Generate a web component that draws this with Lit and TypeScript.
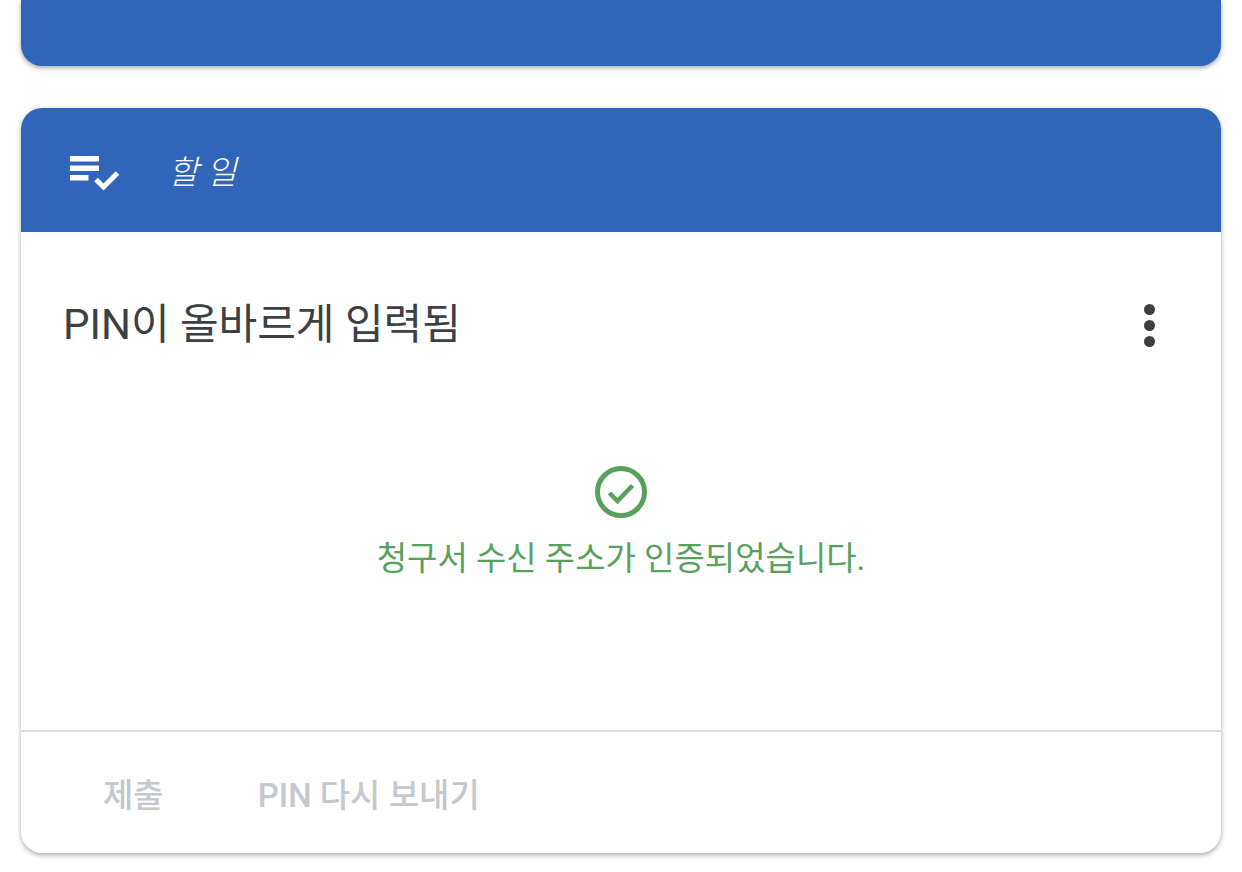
import { LitElement, css, html } from "lit";
import { customElement } from "lit/decorators.js";

@customElement("app-root")
export class AppRoot extends LitElement {
  render() {
    return html`
      <div class="card top"></div>
      <div class="card">
        <div class="head">
          <svg class="list-icon" width="52" height="40" viewBox="0 0 52 40">
            <path fill="#fff" d="M2 4h29v5.5H2zM2 13.5h29V19H2zM2 23h18.500v5.500H2z" />
            <path fill="none" stroke="#fff" stroke-width="5" d="M28 27.500l7.500 7.500 14-14" />
          </svg>
          <span class="head-title">할 일</span>
        </div>
        <div class="body">
          <div class="title-row">
            <span class="title">PIN이 올바르게 입력됨</span>
            <div class="dots"><i></i><i></i><i></i></div>
          </div>
          <div class="status">
            <svg width="52" height="52" viewBox="0 0 52 52">
              <circle cx="26" cy="26" r="23.500" fill="none" stroke="#58a05c" stroke-width="5" />
              <path fill="none" stroke="#58a05c" stroke-width="4.500" d="M14.500 27l8 8 15-15.500" />
            </svg>
            <div class="status-text">청구서 수신 주소가 인증되었습니다.</div>
          </div>
        </div>
        <div class="actions">
          <span>제출</span>
          <span>PIN 다시 보내기</span>
        </div>
      </div>
    `;
  }

  static styles = css`
    :host {
      display: block;
      height: 872px;
      overflow: hidden;
      background: #fff;
      font-family: Roboto, "Noto Sans CJK KR", sans-serif;
    }
    .card {
      margin: 0 21px;
      height: 745px;
      border-radius: 21px;
      background: #fff;
      box-shadow: 0 2px 5px rgba(60, 64, 67, 0.45);
      display: flex;
      flex-direction: column;
      overflow: hidden;
    }
    .card.top {
      height: 66px;
      margin-bottom: 42px;
      background: #3065b9;
      border-radius: 0 0 21px 21px;
    }
    .head {
      height: 124px;
      flex: none;
      background: #3065b9;
      display: flex;
      align-items: center;
      color: #fff;
      padding-left: 47px;
    }
    .list-icon {
      margin-top: 4px;
    }
    .head-title {
      margin-left: 48px;
      font-size: 33px;
      font-style: italic;
      font-weight: 300;
    }
    .body {
      flex: 1;
      display: flex;
      flex-direction: column;
    }
    .title-row {
      display: flex;
      align-items: center;
      justify-content: space-between;
      padding: 65px 66px 0 42px;
    }
    .title {
      font-size: 42px;
      line-height: 56px;
      color: #3c4043;
      font-weight: 400;
    }
    .dots {
      display: flex;
      flex-direction: column;
      gap: 5px;
    }
    .dots i {
      display: block;
      width: 11px;
      height: 11px;
      border-radius: 50%;
      background: #3c4043;
    }
    .status {
      display: flex;
      flex-direction: column;
      align-items: center;
      margin-top: 113px;
    }
    .status-text {
      margin-top: 17px;
      font-size: 33px;
      line-height: 48px;
      color: #58a05c;
    }
    .actions {
      flex: none;
      height: 121px;
      border-top: 2px solid #dadce0;
      display: flex;
      align-items: center;
      gap: 94px;
      padding-left: 82px;
      font-size: 33px;
      font-weight: 500;
      color: #c4c7cb;
    }
  `;
}
